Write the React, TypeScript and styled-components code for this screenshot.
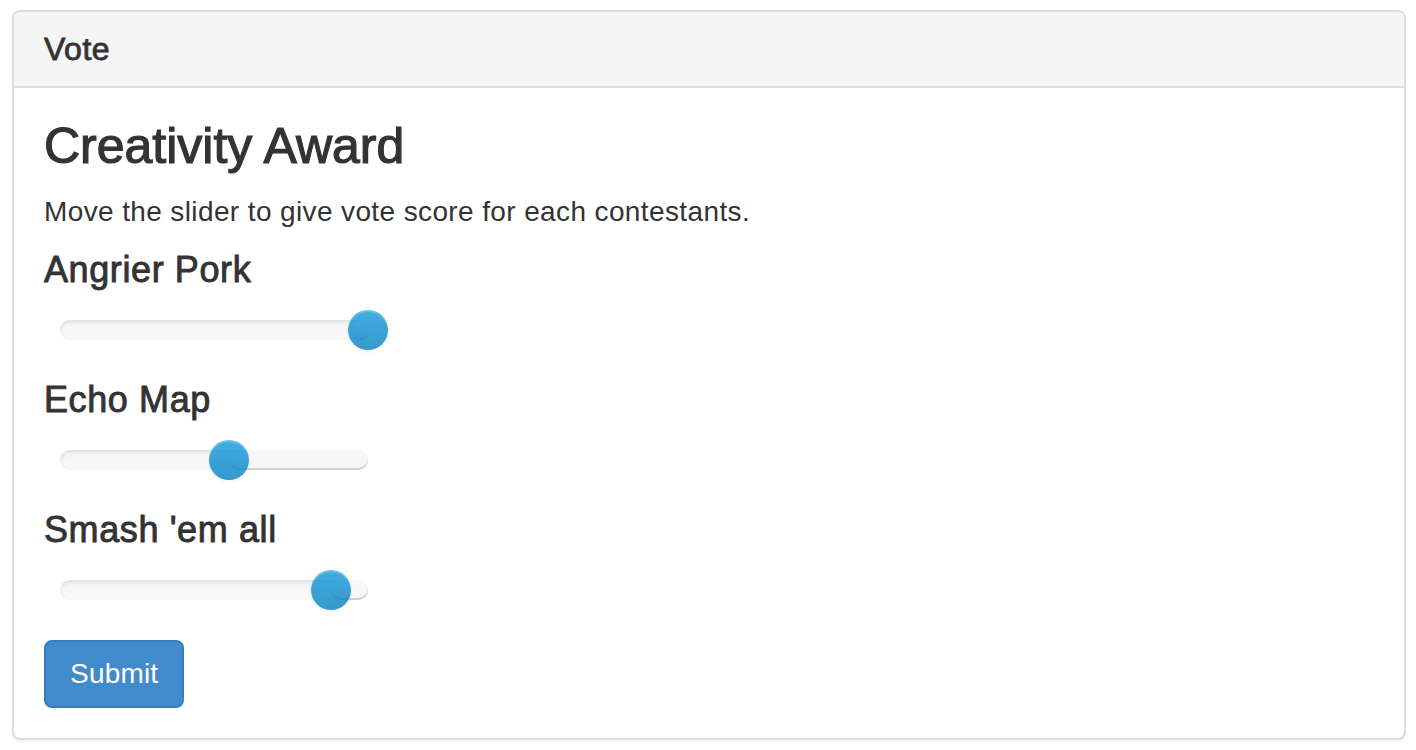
import React from "react";
import styled, { createGlobalStyle } from "styled-components";

const GlobalStyle = createGlobalStyle`
  html, body {
    margin: 0;
    padding: 0;
    background: #ffffff;
  }
  body {
    font-family: "Liberation Sans", Arial, Helvetica, sans-serif;
    color: #333333;
    -webkit-font-smoothing: antialiased;
  }
  * { box-sizing: border-box; }
`;

const Page = styled.div`
  padding: 10px 10px 10px 12px;
`;

const Panel = styled.section`
  border: 2px solid #dddddd;
  border-radius: 8px;
  background: #ffffff;
  box-shadow: 0 2px 2px rgba(0, 0, 0, 0.05);
  overflow: hidden;
`;

const PanelHeading = styled.header`
  background: #f5f5f5;
  border-bottom: 2px solid #dddddd;
  padding: 20px 30px;
`;

const PanelTitle = styled.h3`
  margin: 0;
  font-size: 32px;
  line-height: 34px;
  font-weight: 400;
  letter-spacing: 0.5px;
  -webkit-text-stroke: 0.8px #333333;
  color: #333333;
`;

const PanelBody = styled.div`
  padding: 30px;
`;

const AwardTitle = styled.h3`
  margin: 0;
  font-size: 50px;
  line-height: 56px;
  font-weight: 400;
  -webkit-text-stroke: 1.2px #333333;
  color: #333333;
`;

const Intro = styled.p`
  margin: 18px 0 0;
  font-size: 28px;
  line-height: 40px;
  letter-spacing: 0.38px;
`;

const Contestant = styled.div<{ $first?: boolean }>`
  margin-top: ${(p) => (p.$first ? "18px" : "30px")};
`;

const ContestantName = styled.h4`
  margin: 0;
  font-size: 36px;
  line-height: 40px;
  font-weight: 400;
  letter-spacing: 0.6px;
  -webkit-text-stroke: 0.9px #333333;
  color: #333333;
`;

const SliderRow = styled.div`
  margin-top: 20px;
  height: 40px;
  padding-left: 16px;
  display: flex;
  align-items: center;
`;

const Track = styled.div`
  position: relative;
  width: 308px;
  height: 20px;
  border-radius: 10px;
  background-image: linear-gradient(to bottom, #f5f5f5, #f9f9f9);
  box-shadow: inset 0 2px 4px rgba(0, 0, 0, 0.1);
`;

const Selection = styled.div`
  position: absolute;
  top: 0;
  bottom: 0;
  right: 0;
  border-radius: 10px;
  background-image: linear-gradient(to bottom, #f9f9f9, #f5f5f5);
  box-shadow: inset 0 -2px 0 rgba(0, 0, 0, 0.15);
`;

const Handle = styled.div`
  position: absolute;
  top: -10px;
  width: 40px;
  height: 40px;
  margin-left: -20px;
  border-radius: 50%;
  opacity: 0.8;
  background-image: linear-gradient(to bottom, #149bdf, #0480be);
  box-shadow: inset 0 2px 0 rgba(255, 255, 255, 0.2), 0 2px 4px rgba(0, 0, 0, 0.05);
`;

const SubmitButton = styled.button`
  margin-top: 30px;
  display: inline-block;
  font-family: "Liberation Sans", Arial, Helvetica, sans-serif;
  font-size: 28px;
  line-height: 40px;
  padding: 12px 24px;
  letter-spacing: 0.2px;
  color: #ffffff;
  background: #428bca;
  border: 2px solid #357ebd;
  border-radius: 8px;
  cursor: pointer;
`;

type Entry = { name: string; value: number };

const entries: Entry[] = [
  { name: "Angrier Pork", value: 100 },
  { name: "Echo Map", value: 55 },
  { name: "Smash 'em all", value: 88 },
];

function Slider({ value }: { value: number }) {
  return (
    <SliderRow>
      <Track>
        <Selection style={{ width: `${100 - value}%`, minWidth: 15 }} />
        <Handle style={{ left: `${value}%` }} />
      </Track>
    </SliderRow>
  );
}

export default function App() {
  return (
    <>
      <GlobalStyle />
      <Page>
        <Panel>
          <PanelHeading>
            <PanelTitle>Vote</PanelTitle>
          </PanelHeading>
          <PanelBody>
            <AwardTitle>Creativity Award</AwardTitle>
            <Intro>Move the slider to give vote score for each contestants.</Intro>
            {entries.map((e, i) => (
              <Contestant key={e.name} $first={i === 0}>
                <ContestantName>{e.name}</ContestantName>
                <Slider value={e.value} />
              </Contestant>
            ))}
            <SubmitButton type="button">Submit</SubmitButton>
          </PanelBody>
        </Panel>
      </Page>
    </>
  );
}
